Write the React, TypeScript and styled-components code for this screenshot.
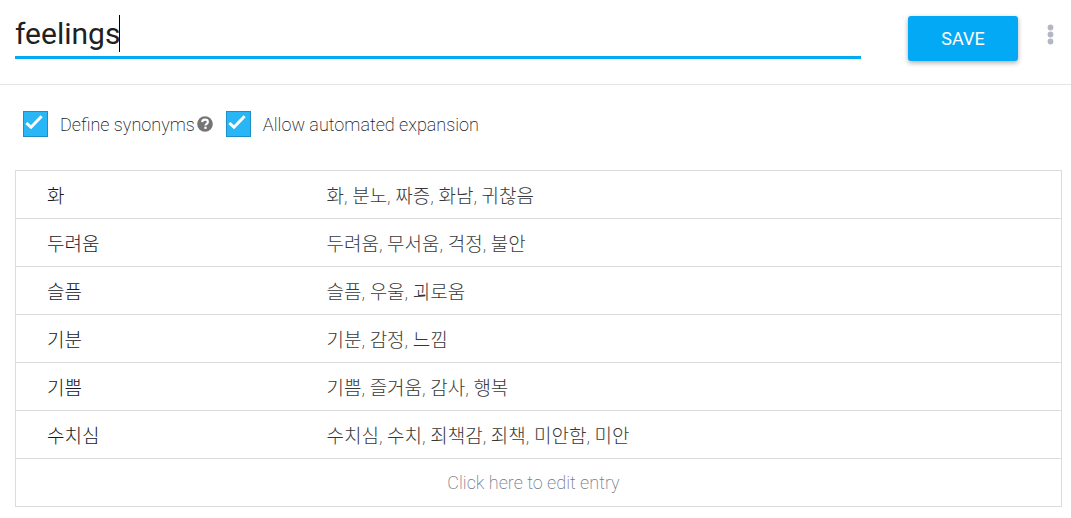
import React, { useState } from "react";
import styled, { createGlobalStyle } from "styled-components";

const GlobalStyle = createGlobalStyle`
  *, *::before, *::after { box-sizing: border-box; }
  body {
    margin: 0;
    background: #fff;
    color: #151826;
    font-family: Roboto, "Noto Sans CJK KR", sans-serif;
    font-size: 18px;
    font-weight: 200;
  }
`;

const Header = styled.header`
  display: flex;
  align-items: flex-start;
  padding: 15px 15px 23px;
  border-bottom: 1px solid #e5e5e5;
`;

const NameField = styled.div`
  flex: 1;
  display: flex;
  min-width: 0;
  height: 44px;
  margin-right: 47px;
  border-bottom: 3px solid #03a9f4;
`;

const NameInput = styled.input`
  field-sizing: content;
  height: 37px;
  padding: 0;
  border: 0;
  outline: 0;
  background: transparent;
  color: #212121;
  caret-color: transparent;
  font: 400 30px/37px Roboto, sans-serif;
`;

const Caret = styled.span`
  width: 1px;
  height: 37px;
  margin-left: -1px;
  background: #000;
`;

const SaveButton = styled.button`
  width: 110px;
  height: 45px;
  margin-top: 1px;
  padding: 0;
  border: 0;
  border-radius: 3px;
  background: #03a9f4;
  box-shadow: 0 2px 5px rgba(0, 0, 0, 0.32);
  color: #fff;
  font: 400 18px/45px Roboto, sans-serif;
`;

const MenuButton = styled.button`
  display: flex;
  width: 20px;
  height: 24px;
  margin: 8px -4px 0 22px;
  padding: 0;
  border: 0;
  background: none;
  justify-content: center;
`;

const Options = styled.div`
  display: flex;
  align-items: center;
  padding: 26px 23px 33px;
`;

const Option = styled.label`
  display: flex;
  align-items: center;
  gap: 12px;
  line-height: 26px;
`;

const OptionText = styled.span`
  padding-top: 2px;
  line-height: 24px;
`;

const CheckArea = styled.span`
  display: grid;
  width: 25px;
  height: 26px;
  > * { grid-area: 1 / 1; }
  svg { pointer-events: none; }
`;

const CheckInput = styled.input`
  appearance: none;
  width: 25px;
  height: 26px;
  margin: 0;
  border: 1px solid #1c8fc4;
  background: #fff;
  &:checked { background: #29b6f6; }
  &:not(:checked) + svg { visibility: hidden; }
`;

const HelpButton = styled.button`
  display: flex;
  margin: 0 13px 0 2px;
  padding: 0;
  border: 0;
  background: none;
`;

const Main = styled.main`
  padding: 0 9px 11px 15px;
`;

const Entries = styled.table`
  width: 100%;
  border: 1px solid #dcdcdc;
  border-collapse: collapse;
  table-layout: fixed;
`;

const KeyColumn = styled.col`
  width: 280px;
`;

const Row = styled.tr`
  height: 48px;
  border-bottom: 1px solid #dcdcdc;
`;

const KeyCell = styled.th`
  padding: 4px 0 0 31px;
  font-size: 19px;
  font-weight: 200;
  line-height: 24px;
  text-align: left;
`;

const ValueCell = styled.td`
  padding: 4px 0 0 31px;
  color: #383838;
  font-size: 19px;
  line-height: 24px;
`;

const AddCell = styled.td`
  padding: 0 10px 0 0;
  text-align: center;
`;

const AddButton = styled.button`
  padding: 0;
  border: 0;
  background: none;
  color: #757b8a;
  font: 200 18px/24px Roboto, sans-serif;
`;

const entries: [string, string][] = [
  ["화", "화, 분노, 짜증, 화남, 귀찮음"],
  ["두려움", "두려움, 무서움, 걱정, 불안"],
  ["슬픔", "슬픔, 우울, 괴로움"],
  ["기분", "기분, 감정, 느낌"],
  ["기쁨", "기쁨, 즐거움, 감사, 행복"],
  ["수치심", "수치심, 수치, 죄책감, 죄책, 미안함, 미안"],
];

function Check({ label }: { label: string }) {
  return (
    <Option>
      <CheckArea>
        <CheckInput type="checkbox" defaultChecked />
        <svg width="25" height="26" viewBox="0 0 25 26" aria-hidden="true">
          <path d="M3.3 12 8 16.2 18.6 5.2" fill="none" stroke="#fff" strokeWidth="3" />
        </svg>
      </CheckArea>
      <OptionText>{label}</OptionText>
    </Option>
  );
}

export default function App() {
  const [name, setName] = useState("feelings");
  return (
    <>
      <GlobalStyle />
      <Header>
        <NameField>
          <NameInput aria-label="Entity name" value={name} onChange={(e) => setName(e.target.value)} />
          <Caret />
        </NameField>
        <SaveButton type="button">SAVE</SaveButton>
        <MenuButton type="button" aria-label="More options">
          <svg width="8" height="24" viewBox="0 0 8 24" fill="#b4b7c3">
            <circle cx="4.5" cy="4.5" r="2.9" />
            <circle cx="4.5" cy="11.5" r="2.9" />
            <circle cx="4.5" cy="18.5" r="2.9" />
          </svg>
        </MenuButton>
      </Header>
      <Options>
        <Check label="Define synonyms" />
        <HelpButton type="button" aria-label="About synonyms">
          <svg width="16" height="16" viewBox="0 0 16 16">
            <circle cx="8" cy="8" r="7.8" fill="#757575" />
            <path d="M5.1 6.1C5.3 4.4 6.5 3.6 8 3.6s2.9.9 2.9 2.4c0 1.9-2.4 1.8-2.4 3.5" fill="none" stroke="#fff" strokeWidth="2.1" />
            <rect x="7.3" y="10.7" width="2.3" height="2.2" fill="#fff" />
          </svg>
        </HelpButton>
        <Check label="Allow automated expansion" />
      </Options>
      <Main>
        <Entries>
          <colgroup>
            <KeyColumn />
            <col />
          </colgroup>
          <tbody>
            {entries.map(([key, values]) => (
              <Row key={key}>
                <KeyCell scope="row">{key}</KeyCell>
                <ValueCell>{values}</ValueCell>
              </Row>
            ))}
            <Row>
              <AddCell colSpan={2}>
                <AddButton type="button">Click here to edit entry</AddButton>
              </AddCell>
            </Row>
          </tbody>
        </Entries>
      </Main>
    </>
  );
}
